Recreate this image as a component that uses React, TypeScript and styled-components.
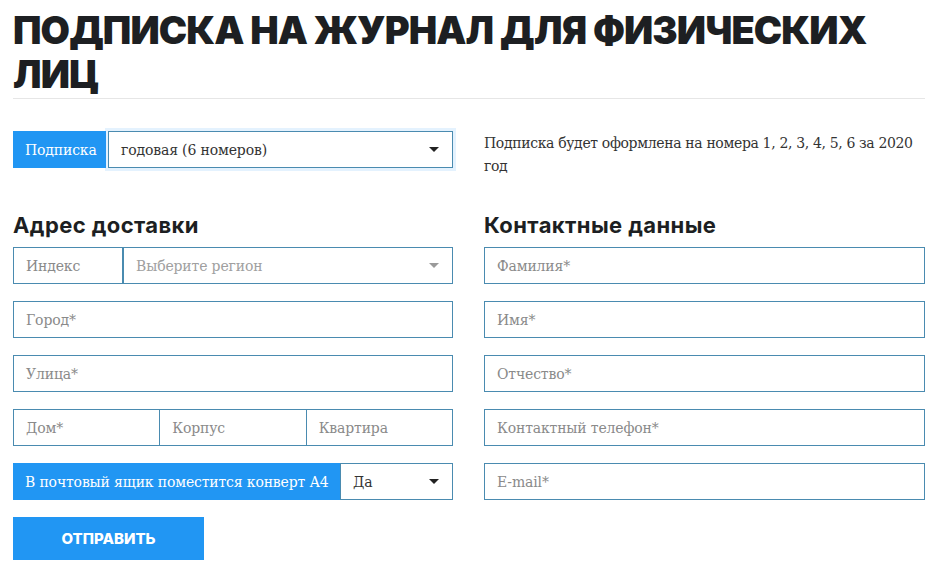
import React from "react"
import styled, { createGlobalStyle } from "styled-components"

const GlobalStyle = createGlobalStyle`
  body {
    margin: 0;
    background: #ffffff;
    font-family: "DejaVu Serif", "Liberation Serif", serif;
    color: #333333;
  }
  * { box-sizing: border-box; }
`

const Page = styled.div`
  width: 936px;
  padding: 8px 11px 0 13px;
`

const Title = styled.h1`
  margin: 0;
  font-family: Inter, "DejaVu Sans", sans-serif;
  font-weight: 900;
  font-size: 38px;
  line-height: 44px;
  letter-spacing: -0.9px;
  color: #1d1f22;
  text-transform: uppercase;
  padding-bottom: 2px;
  border-bottom: 1px solid #e6e6e6;
`

const Grid = styled.div`
  display: grid;
  grid-template-columns: 440px 441px;
  column-gap: 31px;
  margin-top: 32px;
`

const Column = styled.div`
  display: flex;
  flex-direction: column;
  gap: 17px;
`

const Heading = styled.h2<{ $top: number }>`
  margin: ${(p) => p.$top}px 0 -8px;
  font-family: Inter, "DejaVu Sans", sans-serif;
  font-weight: 700;
  font-size: 22px;
  line-height: 26px;
  letter-spacing: 0.4px;
  color: #1d1f22;
`

const Row = styled.div`
  display: flex;
  height: 37px;
`

const Tag = styled.div<{ $width: number }>`
  flex: 0 0 ${(p) => p.$width}px;
  min-width: 0;
  overflow: hidden;
  display: flex;
  align-items: center;
  padding: 0 11px 0 12px;
  background: #2196f3;
  color: #ffffff;
  font-size: 14px;
  letter-spacing: -0.15px;
  white-space: nowrap;
`

const Field = styled.div<{ $width?: number; $muted?: boolean }>`
  flex: ${(p) => (p.$width ? `0 0 ${p.$width}px` : "1 1 0")};
  min-width: 0;
  display: flex;
  align-items: center;
  justify-content: space-between;
  padding: 0 12px;
  border: 1px solid #4a8bb0;
  margin-left: -1px;
  &:first-child { margin-left: 0; }
  font-size: 14px;
  letter-spacing: -0.15px;
  color: ${(p) => (p.$muted ? "#8a8a8a" : "#333333")};
  background: #ffffff;
  white-space: nowrap;
`

const Select = styled(Field)<{ $glow?: boolean; $light?: boolean }>`
  margin-left: ${(p) => (p.$glow ? "2px" : "0")};
  color: ${(p) => (p.$light ? "#a0a0a0" : "#333333")};
  box-shadow: ${(p) => (p.$glow ? "0 0 0 3px rgba(33,150,243,0.12)" : "none")};
`

const Caret = styled.span<{ $light?: boolean }>`
  width: 0;
  height: 0;
  border-left: 5px solid transparent;
  border-right: 5px solid transparent;
  border-top: 5px solid ${(p) => (p.$light ? "#9a9a9a" : "#222222")};
  margin-right: 1px;
`

const Note = styled.p`
  margin: 0;
  padding-top: 1px;
  font-size: 14px;
  line-height: 23px;
  letter-spacing: -0.35px;
  color: #333333;
`

const SubmitButton = styled.button`
  align-self: flex-start;
  width: 191px;
  height: 43px;
  border: none;
  background: #2196f3;
  color: #ffffff;
  font-family: Inter, "DejaVu Sans", sans-serif;
  font-weight: 800;
  font-size: 15px;
  text-transform: uppercase;
  cursor: pointer;
`

export default function App() {
  return (
    <Page>
      <GlobalStyle />
      <Title>Подписка на журнал для физических лиц</Title>
      <Grid>
        <Column>
          <Row>
            <Tag $width={93}>Подписка</Tag>
            <Select $glow>
              годовая (6 номеров)
              <Caret />
            </Select>
          </Row>
          <Heading $top={27}>Адрес доставки</Heading>
          <Row>
            <Field $width={110} $muted>Индекс</Field>
            <Select $light>
              Выберите регион
              <Caret $light />
            </Select>
          </Row>
          <Row>
            <Field $muted>Город*</Field>
          </Row>
          <Row>
            <Field $muted>Улица*</Field>
          </Row>
          <Row>
            <Field $muted>Дом*</Field>
            <Field $muted>Корпус</Field>
            <Field $muted>Квартира</Field>
          </Row>
          <Row>
            <Tag $width={327}>В почтовый ящик поместится конверт А4</Tag>
            <Select>
              Да
              <Caret />
            </Select>
          </Row>
          <SubmitButton type="button">Отправить</SubmitButton>
        </Column>
        <Column>
          <Note>Подписка будет оформлена на номера 1, 2, 3, 4, 5, 6 за 2020 год</Note>
          <Heading $top={17}>Контактные данные</Heading>
          <Row>
            <Field $muted>Фамилия*</Field>
          </Row>
          <Row>
            <Field $muted>Имя*</Field>
          </Row>
          <Row>
            <Field $muted>Отчество*</Field>
          </Row>
          <Row>
            <Field $muted>Контактный телефон*</Field>
          </Row>
          <Row>
            <Field $muted>E-mail*</Field>
          </Row>
        </Column>
      </Grid>
    </Page>
  )
}
